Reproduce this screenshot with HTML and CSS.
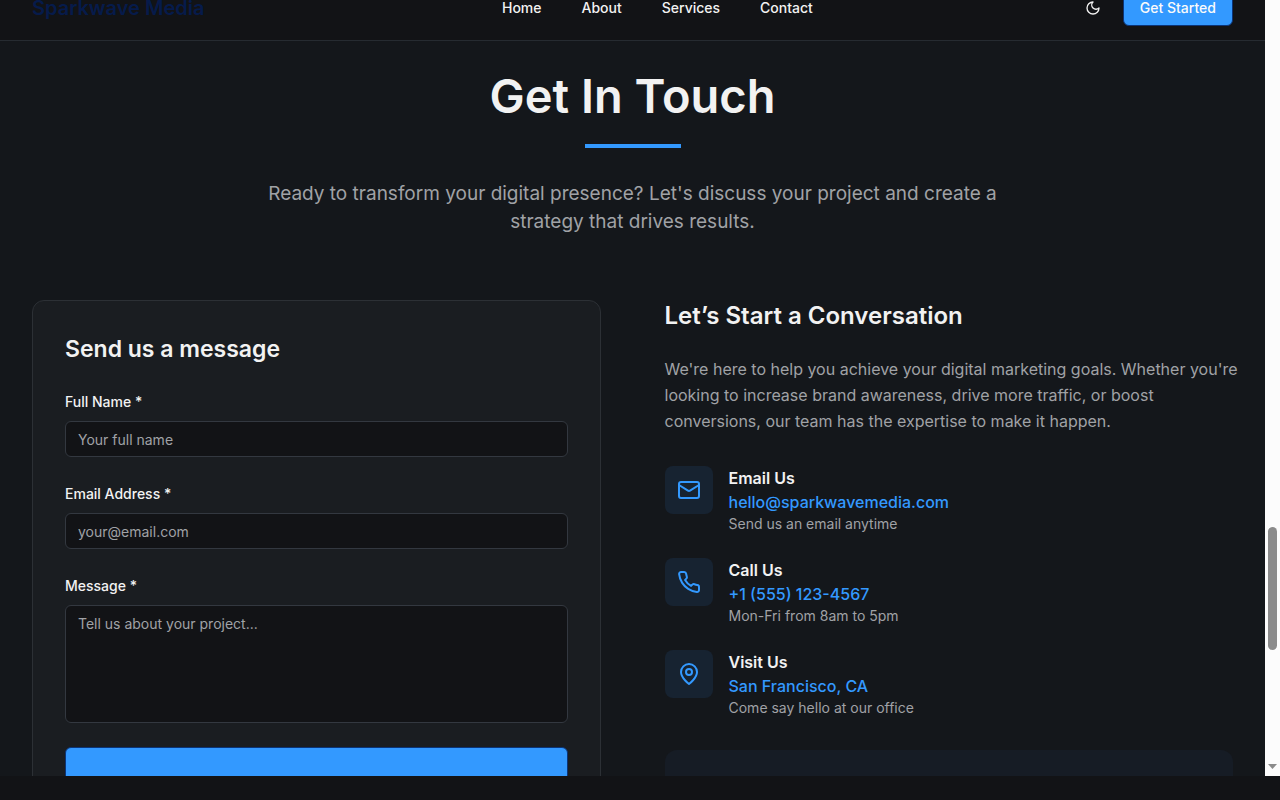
FILE: index.html
```html
<!DOCTYPE html>
<html lang="en">
<head>
<meta charset="utf-8">
<meta name="viewport" content="width=device-width, initial-scale=1">
<title>Sparkwave Media</title>
<link rel="stylesheet" href="styles.css">
</head>
<body>
<div class="page">
  <header class="header">
    <a class="logo" href="#">Sparkwave Media</a>
    <nav class="nav">
      <a href="#home">Home</a>
      <a href="#about">About</a>
      <a href="#services">Services</a>
      <a href="#contact">Contact</a>
    </nav>
    <div class="actions">
      <button class="theme" type="button" aria-label="Toggle theme">
        <svg class="icon icon-small" viewBox="0 0 24 24"><path d="M12 3a6 6 0 0 0 9 9 9 9 0 1 1-9-9Z"/></svg>
      </button>
      <button class="button" type="button">Get Started</button>
    </div>
  </header>
  <main class="contact" id="contact">
    <div class="intro">
      <h1>Get In Touch</h1>
      <div class="rule"></div>
      <p>Ready to transform your digital presence? Let's discuss your project and create a strategy that drives results.</p>
    </div>
    <div class="columns">
      <form class="card">
        <h2 class="form-title">Send us a message</h2>
        <div class="field">
          <label for="name">Full Name *</label>
          <input id="name" type="text" placeholder="Your full name">
        </div>
        <div class="field">
          <label for="email">Email Address *</label>
          <input id="email" type="email" placeholder="your@email.com">
        </div>
        <div class="field">
          <label for="message">Message *</label>
          <textarea id="message" placeholder="Tell us about your project..."></textarea>
        </div>
        <button class="button submit" type="submit" aria-label="Submit"></button>
      </form>
      <section class="info">
        <h2>Let’s Start a Conversation</h2>
        <p class="lead">We're here to help you achieve your digital marketing goals. Whether you're looking to increase brand awareness, drive more traffic, or boost conversions, our team has the expertise to make it happen.</p>
        <ul class="methods">
          <li class="method">
            <span class="tile"><svg class="icon" viewBox="0 0 24 24"><rect width="20" height="16" x="2" y="4" rx="2"/><path d="m22 7-8.97 5.7a1.94 1.94 0 0 1-2.06 0L2 7"/></svg></span>
            <div>
              <h3>Email Us</h3>
              <a href="mailto:hello@sparkwavemedia.com">hello@sparkwavemedia.com</a>
              <p>Send us an email anytime</p>
            </div>
          </li>
          <li class="method">
            <span class="tile"><svg class="icon" viewBox="0 0 24 24"><path d="M22 16.92v3a2 2 0 0 1-2.18 2 19.79 19.79 0 0 1-8.63-3.07 19.5 19.5 0 0 1-6-6 19.79 19.79 0 0 1-3.07-8.67A2 2 0 0 1 4.11 2h3a2 2 0 0 1 2 1.72 12.84 12.84 0 0 0 .7 2.81 2 2 0 0 1-.45 2.11L8.09 9.91a16 16 0 0 0 6 6l1.27-1.27a2 2 0 0 1 2.11-.45 12.84 12.84 0 0 0 2.81.7A2 2 0 0 1 22 16.92z"/></svg></span>
            <div>
              <h3>Call Us</h3>
              <a href="tel:+15551234567">+1 (555) 123-4567</a>
              <p>Mon-Fri from 8am to 5pm</p>
            </div>
          </li>
          <li class="method">
            <span class="tile"><svg class="icon" viewBox="0 0 24 24"><path d="M20 10c0 6-8 12-8 12s-8-6-8-12a8 8 0 0 1 16 0Z"/><circle cx="12" cy="10" r="3"/></svg></span>
            <div>
              <h3>Visit Us</h3>
              <a href="#map">San Francisco, CA</a>
              <p>Come say hello at our office</p>
            </div>
          </li>
        </ul>
        <div class="callout"></div>
      </section>
    </div>
  </main>
</div>
<div class="scrollbar" aria-hidden="true">
  <div class="thumb"></div>
  <svg class="arrow" viewBox="0 0 9 5"><path d="M0 0h9L4.500 5Z"/></svg>
</div>
</body>
</html>
```
FILE: styles.css
```css
* { box-sizing: border-box; }

body {
  margin: 0;
  height: 100vh;
  padding-bottom: 24px;
  display: flex;
  overflow: hidden;
  background: #121316;
  color: #f2f2f2;
  font-family: Inter, sans-serif;
  font-size: 16px;
  line-height: 24px;
}

h1, h2, h3, p, ul { margin: 0; padding: 0; }
a { color: inherit; text-decoration: none; }
button, input, textarea { font: inherit; }

.page {
  flex: 1;
  min-width: 0;
  overflow: hidden;
  background: #14171b;
}

/* The bar is partly scrolled past the top edge. */
.header {
  height: 65px;
  margin-top: -24px;
  padding: 0 32px;
  display: flex;
  align-items: center;
  justify-content: space-between;
  background: #121316;
  border-bottom: 1px solid #262b31;
}

.logo {
  width: 168px;
  white-space: nowrap;
  color: #061b4b;
  font-size: 20px;
  font-weight: 600;
}

.nav {
  display: flex;
  gap: 40px;
  margin-left: 40px;
  font-size: 14px;
  font-weight: 500;
}

.actions { display: flex; align-items: center; gap: 12px; }

.theme {
  width: 36px;
  height: 36px;
  padding: 0;
  display: grid;
  place-items: center;
  background: none;
  border: 0;
  color: inherit;
}

.icon {
  width: 24px;
  height: 24px;
  fill: none;
  stroke: currentColor;
  stroke-width: 2;
  stroke-linecap: round;
  stroke-linejoin: round;
}

.icon-small { width: 16px; height: 16px; }

.button {
  height: 36px;
  padding: 0 16px;
  border: 1px solid #0b3478;
  border-radius: 6px;
  background: #3399ff;
  color: #fafafa;
  font-size: 14px;
  font-weight: 500;
  line-height: 20px;
}

.contact { padding: 31px 32px 96px; }

.intro {
  display: flex;
  flex-direction: column;
  align-items: center;
  text-align: center;
}

.intro h1 { font-size: 47px; line-height: 48px; font-weight: 600; }

.rule {
  width: 96px;
  height: 4px;
  margin: 24px 0 32px;
  background: #3399ff;
}

.intro p {
  max-width: 768px;
  color: #a0a2a6;
  font-size: 19px;
  line-height: 28px;
}

.columns {
  display: grid;
  grid-template-columns: 1fr 1fr;
  gap: 64px;
  margin-top: 64px;
}

h2 { font-size: 24px; line-height: 32px; font-weight: 600; }

.card .form-title { font-size: 23px; }

.card {
  padding: 32px;
  display: flex;
  flex-direction: column;
  gap: 24px;
  background: #1a1d21;
  border: 1px solid #2c3035;
  border-radius: 12px;
}

.field { display: flex; flex-direction: column; gap: 6px; }

.field label { font-size: 14px; line-height: 26px; font-weight: 500; }

.field input, .field textarea {
  width: 100%;
  height: 36px;
  padding: 8px 12px;
  background: #121316;
  border: 1px solid #333840;
  border-radius: 6px;
  color: inherit;
  font-size: 14px;
  line-height: 20px;
}

.field textarea { height: 118px; resize: none; }

.field ::placeholder { color: #a0a2a6; opacity: 1; }

.submit { height: 44px; }

.lead {
  margin: 24px -8px 32px 0;
  color: #a0a2a6;
  line-height: 26px;
}

.methods {
  display: grid;
  gap: 24px;
  list-style: none;
}

.method { display: flex; gap: 16px; }

.tile {
  width: 48px;
  height: 48px;
  display: grid;
  place-items: center;
  border-radius: 8px;
  background: #172331;
  color: #3399ff;
}

.method h3 { font-size: 16px; font-weight: 600; }
.method a { display: block; color: #3399ff; font-weight: 500; }
.method p { color: #a0a2a6; font-size: 14px; line-height: 20px; }

.callout {
  height: 120px;
  margin-top: 32px;
  border-radius: 12px;
  background: #161c25;
}

.scrollbar {
  width: 15px;
  padding: 0 3px 7px;
  display: flex;
  flex-direction: column;
  justify-content: flex-end;
  background: #fcfcfc;
}

.thumb {
  height: 123px;
  margin-bottom: 114px;
  border-radius: 5px;
  background: #8b8b8b;
}

.arrow { width: 9px; height: 5px; fill: #8b8b8b; }
```
